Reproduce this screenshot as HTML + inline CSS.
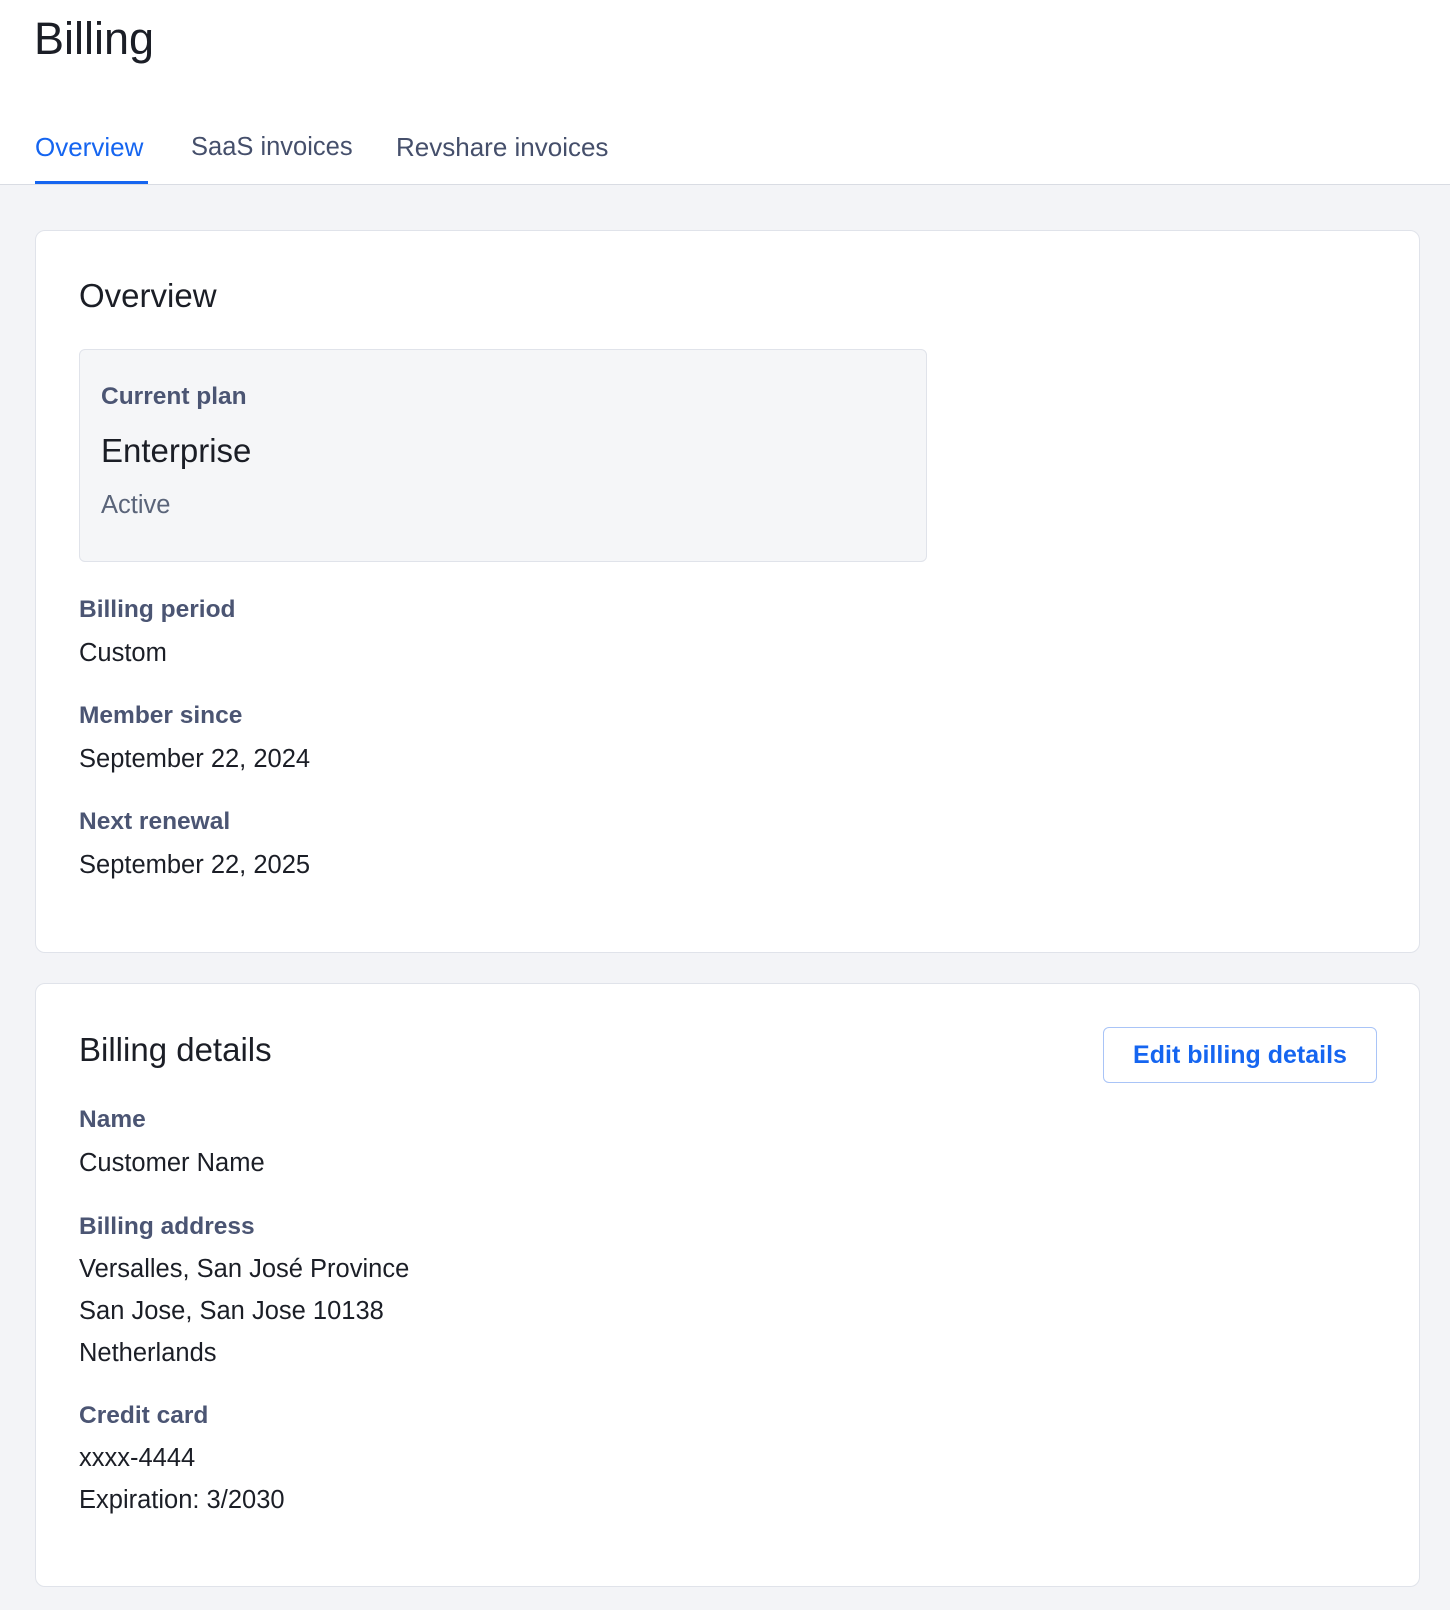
<!DOCTYPE html>
<html><head><meta charset="utf-8"><style>
*{margin:0;padding:0;box-sizing:border-box}
body{width:1450px;height:1610px;background:#f3f4f7;font-family:"Liberation Sans",sans-serif;position:relative;overflow:hidden;color:#1b1e26}
.hdr{position:absolute;left:0;top:0;width:1450px;height:185px;background:#fff;border-bottom:1px solid #d9dce3}
.t{position:absolute;line-height:40px;white-space:nowrap}
.card{position:absolute;left:35px;width:1385px;background:#fff;border:1px solid #e0e3ea;border-radius:10px}
.lbl{font-size:24.5px;font-weight:bold;color:#4b5573}
.val{font-size:25.5px;color:#1b1e26}
.h{font-size:33px;color:#1b1e26}
</style></head><body>
<div class="hdr"></div>
<div class="t" style="left:34px;top:11px;font-size:45px;line-height:56px">Billing</div>
<div class="t" style="left:35px;top:127px;font-size:26px;color:#1565f0">Overview</div>
<div class="t" style="left:191px;top:127px;font-size:25.5px;color:#454f6b">SaaS invoices</div>
<div class="t" style="left:396px;top:127px;font-size:26px;color:#454f6b">Revshare invoices</div>
<div style="position:absolute;left:35px;top:181px;width:113px;height:3px;background:#1565f0"></div>

<div class="card" style="top:230px;height:723px"></div>
<div class="t h" style="left:79px;top:276px">Overview</div>
<div style="position:absolute;left:79px;top:349px;width:848px;height:213px;background:#f5f6f8;border:1px solid #e0e3ea;border-radius:6px"></div>
<div class="t lbl" style="left:101px;top:377px">Current plan</div>
<div class="t h" style="left:101px;top:431px">Enterprise</div>
<div class="t val" style="left:101px;top:485px;color:#5a6479">Active</div>
<div class="t lbl" style="left:79px;top:590px">Billing period</div>
<div class="t val" style="left:79px;top:633px">Custom</div>
<div class="t lbl" style="left:79px;top:696px">Member since</div>
<div class="t val" style="left:79px;top:739px">September 22, 2024</div>
<div class="t lbl" style="left:79px;top:802px">Next renewal</div>
<div class="t val" style="left:79px;top:845px">September 22, 2025</div>

<div class="card" style="top:983px;height:604px"></div>
<div class="t h" style="left:79px;top:1030px">Billing details</div>
<div style="position:absolute;left:1103px;top:1027px;width:274px;height:56px;border:1px solid #a9c4f7;border-radius:6px;color:#1565f0;font-size:25px;font-weight:bold;text-align:center;line-height:54px">Edit billing details</div>
<div class="t lbl" style="left:79px;top:1100px">Name</div>
<div class="t val" style="left:79px;top:1143px">Customer Name</div>
<div class="t lbl" style="left:79px;top:1207px">Billing address</div>
<div class="t val" style="left:79px;top:1249px">Versalles, San José Province</div>
<div class="t val" style="left:79px;top:1291px">San Jose, San Jose 10138</div>
<div class="t val" style="left:79px;top:1333px">Netherlands</div>
<div class="t lbl" style="left:79px;top:1396px">Credit card</div>
<div class="t val" style="left:79px;top:1438px">xxxx-4444</div>
<div class="t val" style="left:79px;top:1480px">Expiration: 3/2030</div>
</body></html>
